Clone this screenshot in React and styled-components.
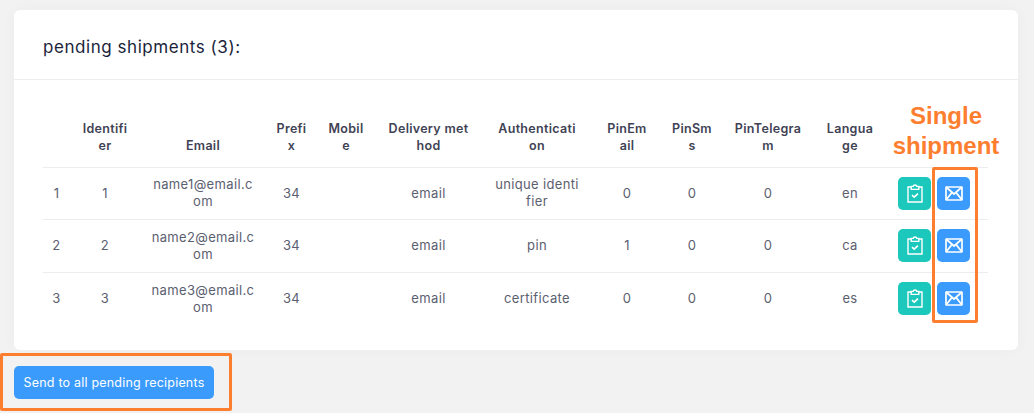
import React from 'react';
import styled, { createGlobalStyle } from 'styled-components';

const Global = createGlobalStyle`
  html, body { margin: 0; padding: 0; background: #f2f2f3; }
  body { font-family: "Inter", "Noto Sans", "Liberation Sans", sans-serif; }
`;
const Page = styled.div`
  position: relative;
  width: 1034px;
  height: 413px;
  overflow: hidden;
  padding: 10px 16px 0 14px;
  box-sizing: border-box;
`;
const Card = styled.section`
  background: #fff;
  border-radius: 6px;
  height: 340px;
  box-shadow: 0 0 16px rgba(0, 0, 0, 0.03);
  margin-bottom: 16px;
`;
const CardHeader = styled.header`
  height: 69px;
  border-bottom: 1px solid #ecedf0;
  padding-left: 29px;
  display: flex;
  align-items: center;
`;
const Title = styled.h2`
  margin: 4px 0 0;
  font-size: 17px;
  font-weight: 400;
  color: #1b1f3b;
  letter-spacing: 0.55px;
`;
const CardBody = styled.div`
  padding: 26px 30px 0 29px;
`;
const Table = styled.table`
  width: 945px;
  table-layout: fixed;
  border-collapse: collapse;
  font-size: 13px;
  line-height: 17px;
  letter-spacing: 0.35px;
`;
const Head = styled.th`
  width: ${p => p.$w}px;
  padding: 0 0 13px;
  height: 61px;
  box-sizing: border-box;
  vertical-align: bottom;
  text-align: center;
  font-weight: 600;
  font-size: 12.5px;
  letter-spacing: 0.3px;
  color: #3f4254;
  border-bottom: 1px solid #ecedf0;
`;
const Row = styled.tr`
  height: 52.5px;
`;
const Cell = styled.td`
  padding: 0;
  text-align: center;
  vertical-align: middle;
  color: #5b6070;
  border-bottom: ${p => (p.$last ? 'none' : '1px solid #ecedf0')};
`;
const Actions = styled.div`
  display: flex;
  gap: 6px;
  padding-left: 12px;
`;
const IconButton = styled.button`
  width: 33px;
  height: 33px;
  padding: 0;
  border: none;
  border-radius: 5px;
  background: ${p => p.$bg};
  display: flex;
  align-items: center;
  justify-content: center;
  color: #fff;
`;
const SendButton = styled.button`
  display: block;
  width: 200px;
  height: 33px;
  padding: 0;
  border: none;
  border-radius: 5px;
  background: #3a9bfd;
  color: #fff;
  letter-spacing: 0.2px;
  font: 400 12.5px "Inter", "Noto Sans", sans-serif;
`;
const Callout = styled.div`
  position: absolute;
  box-sizing: border-box;
  border: 3px solid #fd7e2f;
  border-radius: 2px;
  left: ${p => p.$x}px;
  top: ${p => p.$y}px;
  width: ${p => p.$w}px;
  height: ${p => p.$h}px;
`;
const CalloutLabel = styled.div`
  position: absolute;
  left: 886px;
  top: 101px;
  width: 120px;
  text-align: center;
  font: 700 24px/30px "Liberation Sans", Arial, sans-serif;
  color: #fd7e2f;
`;

const ClipboardIcon = () => (
  <svg width="16" height="19" viewBox="0 0 16 19" fill="none" stroke="currentColor" strokeWidth="1.4">
    <path d="M4 3H1V18H15V3H12" />
    <path d="M4.2 5.4V2.4H6.2C6.4 0.5 9.6 0.5 9.8 2.4H11.8V5.4Z" />
    <path d="M5 11.2L7.2 13.2L11 9.6" strokeWidth="1.7" />
  </svg>
);
const MailIcon = () => (
  <svg width="18" height="15" viewBox="0 0 18 15" fill="none" stroke="currentColor" strokeWidth="1.7">
    <rect x="1" y="1" width="16" height="13" rx="0.6" />
    <path d="M1 1L9 8L17 1M1 14L7 6.4M17 14L11 6.4" />
  </svg>
);

const columns = [
  [27, ''], [70, <>Identifi<br />er</>], [126, 'Email'], [51, <>Prefi<br />x</>],
  [58, <>Mobil<br />e</>], [107, <>Delivery met<br />hod</>], [110, <>Authenticati<br />on</>],
  [70, <>PinEm<br />ail</>], [60, <>PinSm<br />s</>], [92, <>PinTelegra<br />m</>],
  [72, <>Langua<br />ge</>], [102, ''],
];
const rows = [
  ['1', '1', <>name1@email.c<br />om</>, '34', '', 'email', <>unique identi<br />fier</>, '0', '0', '0', 'en'],
  ['2', '2', <>name2@email.c<br />om</>, '34', '', 'email', 'pin', '1', '0', '0', 'ca'],
  ['3', '3', <>name3@email.c<br />om</>, '34', '', 'email', 'certificate', '0', '0', '0', 'es'],
];

export default function App() {
  return (
    <Page>
      <Global />
      <Card>
        <CardHeader><Title>pending shipments (3):</Title></CardHeader>
        <CardBody>
          <Table>
            <thead>
              <tr>{columns.map(([w, label], i) => <Head key={i} $w={w}>{label}</Head>)}</tr>
            </thead>
            <tbody>
              {rows.map((row, r) => (
                <Row key={r}>
                  {row.map((value, c) => <Cell key={c} $last={r === 2}>{value}</Cell>)}
                  <Cell $last={r === 2}>
                    <Actions>
                      <IconButton $bg="#1cc7bb"><ClipboardIcon /></IconButton>
                      <IconButton $bg="#3a9bfd"><MailIcon /></IconButton>
                    </Actions>
                  </Cell>
                </Row>
              ))}
            </tbody>
          </Table>
        </CardBody>
      </Card>
      <SendButton>Send to all pending recipients</SendButton>
      <CalloutLabel>Single<br />shipment</CalloutLabel>
      <Callout $x={932} $y={167} $w={46} $h={156} />
      <Callout $x={0} $y={353} $w={232} $h={58} />
    </Page>
  );
}
